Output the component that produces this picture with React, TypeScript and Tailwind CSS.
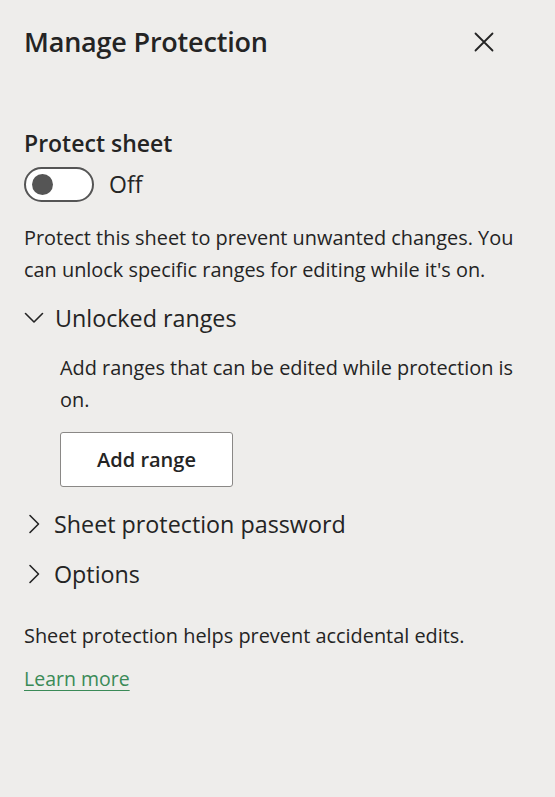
import React from "react";

function ChevronDown() {
  return (
    <svg width="20" height="12" viewBox="0 0 20 12" fill="none" className="text-[#242424]">
      <path d="M1.5 1.5 L10 10 L18.5 1.5" stroke="currentColor" strokeWidth="1.6" strokeLinecap="round" strokeLinejoin="round" />
    </svg>
  );
}

function ChevronRight() {
  return (
    <svg width="12" height="20" viewBox="0 0 12 20" fill="none" className="text-[#242424]">
      <path d="M2 1.5 L10.5 10 L2 18.5" stroke="currentColor" strokeWidth="1.6" strokeLinecap="round" strokeLinejoin="round" />
    </svg>
  );
}

export default function App() {
  return (
    <div
      className="w-[555px] h-[797px] bg-[#eeedeb] text-[#242424] overflow-hidden"
      style={{ fontFamily: '"Open Sans", "Noto Sans", sans-serif' }}
    >
      {/* header */}
      <div className="flex items-center justify-between pl-6 pr-[61px] h-[83px]">
        <h1 className="text-[27px] font-semibold tracking-[-0.2px] leading-none">Manage Protection</h1>
        <button className="w-5 h-5 flex items-center justify-center">
          <svg width="20" height="20" viewBox="0 0 20 20" fill="none">
            <path d="M1.5 1.5 L18.5 18.5 M18.5 1.5 L1.5 18.5" stroke="#242424" strokeWidth="1.8" strokeLinecap="round" />
          </svg>
        </button>
      </div>

      <div className="pl-6 pr-[40px] pt-[46px]">
        <div className="text-[23px] font-semibold leading-[28px]">Protect sheet</div>

        <div className="mt-[10px] flex items-center gap-[15px]">
          <div className="w-[70px] h-[35px] rounded-full border-[2px] border-[#555555] bg-white flex items-center pl-[6px]">
            <div className="w-[21px] h-[21px] rounded-full bg-[#555555]" />
          </div>
          <span className="text-[23px] leading-none">Off</span>
        </div>

        <p className="mt-[20px] text-[19.9px] leading-[32px]">
          Protect this sheet to prevent unwanted changes. You can unlock specific ranges for editing while it's on.
        </p>

        <div className="mt-[16px] flex items-center gap-[11px] h-[32px]">
          <ChevronDown />
          <span className="text-[23.3px]">Unlocked ranges</span>
        </div>

        <div className="pl-[36px]">
          <p className="mt-[18px] text-[19.9px] leading-[32px]">
            Add ranges that can be edited while protection is on.
          </p>
          <button className="mt-[16px] w-[173px] h-[55px] bg-white border border-[#8a8886] rounded-[3px] text-[20px] font-semibold">
            Add range
          </button>
        </div>

        <div className="mt-[21px] flex items-center gap-[14px] h-[32px] pl-[4px]">
          <ChevronRight />
          <span className="text-[23.3px]">Sheet protection password</span>
        </div>

        <div className="mt-[18px] flex items-center gap-[14px] h-[32px] pl-[4px]">
          <ChevronRight />
          <span className="text-[23.3px]">Options</span>
        </div>

        <p className="mt-[30px] text-[19.9px] leading-[32px]">Sheet protection helps prevent accidental edits.</p>

        <a href="#" className="inline-block mt-[11px] text-[19.5px] leading-[32px] text-[#3a8a57] underline underline-offset-[4px]">
          Learn more
        </a>
      </div>
    </div>
  );
}
